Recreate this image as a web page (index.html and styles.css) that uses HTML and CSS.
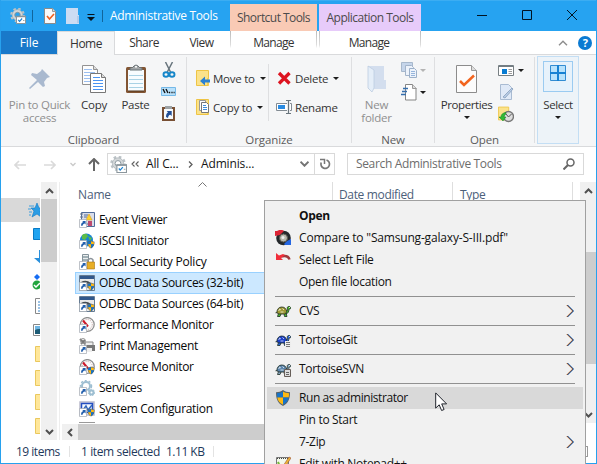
FILE: index.html
```html
<!DOCTYPE html>
<html lang="en">
<head>
<meta charset="utf-8">
<title>Administrative Tools</title>
<link rel="stylesheet" href="styles.css">
</head>
<body>
<svg class="defs" width="0" height="0" aria-hidden="true">
  <defs>
    <symbol id="gear" viewBox="0 0 16 16">
      <g fill="none"><circle cx="7.500" cy="7" r="6.100" stroke="#bcc3c7" stroke-width="2.400" stroke-dasharray="2.390 2.400"/><circle cx="7.500" cy="7" r="4.100" stroke="#d3d7d9" stroke-width="2.600"/><circle cx="7.500" cy="7" r="5.300" stroke="#a4adb2" stroke-width=".6"/><circle cx="7.500" cy="7" r="2.700" stroke="#87949b" stroke-width=".9"/></g>
      <path d="M6.500 8.500h9v7h-9z" fill="#fff" stroke="#8b969c"/><path d="M6 8.500h10" stroke="#8b969c" stroke-width="1.500"/><path d="m8.300 11.800 1.300 1.500 2.500-2.800" fill="none" stroke="#1b83d3" stroke-width="1.200"/><path d="M13 12.500h1.500" stroke="#9aa"/>
    </symbol>
    <symbol id="link" viewBox="0 0 16 16">
      <path d="M.5 7.500h7v8h-7z" fill="#fff" stroke="#a4a9b1" stroke-width=".7"/><path d="M2 13.700c.2-2.300 1-3.200 2.300-3.600L3.200 9h3.400v3.500l-1-1c-1 .3-1.700.8-2 2.200z" fill="#225fad"/>
    </symbol>
    <symbol id="shield" viewBox="0 0 16 16">
      <path d="M8 0c2 1.600 4.300 2.200 7 2.300 0 6.300-1.300 10.700-7 13.700C2.300 13 1 8.600 1 2.300 3.700 2.200 6 1.600 8 0z" fill="#56636b"/>
      <path d="M8 1.600v6H2.300c-.2-1.300-.3-2.600-.3-4.300 2.500-.1 4.400-.7 6-1.700z" fill="#1673c8"/><path d="M8 1.600c1.600 1 3.500 1.600 6 1.700 0 1.700-.1 3-.3 4.300H8z" fill="#fdb912"/><path d="M2.300 7.600H8v7.200c-3.400-1.800-5.200-4-5.700-7.200z" fill="#fdb912"/><path d="M8 7.600h5.700c-.5 3.200-2.300 5.400-5.700 7.200z" fill="#1673c8"/>
    </symbol>
    <symbol id="folder" viewBox="0 0 14 16"><path d="M.5.500h12v15H.5z" fill="#fbe28a" stroke="#eec445"/><path d="M11 8h2v7h-2z" fill="#f3cc53"/></symbol>
    <symbol id="caret" viewBox="0 0 6 3"><path d="M0 0h6L3 3z" fill="currentColor"/></symbol>
    <symbol id="gauge" viewBox="0 0 16 16"><circle cx="8.300" cy="7.500" r="6.900" fill="#fbfbfb" stroke="#8e8e8e" stroke-width="1.300"/><circle cx="8.300" cy="7.500" r="5" fill="none" stroke="#c9a8a8" stroke-dasharray="1 1"/><path d="m4 3.500 5 6" stroke="#cd1728" stroke-width="2"/></symbol>
    <symbol id="odbc" viewBox="0 0 16 16"><path d="M.5.500h15v15H.5z" fill="#e9e9e9" stroke="#657b92"/><path d="M1 1h14v3H1z" fill="#31588c"/><path d="M2 7q5-3 10 1l2 3-3-1Q7 7 3 9z" fill="#454d53"/><path d="M8 9q3-2 5 1v3H8z" fill="#8b9499"/></symbol>
    <symbol id="turtle" viewBox="0 0 16 16"><path d="M11 8.500c1.500-.5 1.700-1.600 1.200-3.500C12 3.300 15.500 2.800 15.700 5c0 1-.9 1-1.700 1 0 2.500-1 4.500-3 5M3 9.500l-2.500.3M3.500 10.500l-1 3H5l1-2.500m3 0 .5 2.500H12l-1-3.500" fill="currentColor" stroke="#1c2b22" stroke-width=".8"/><path d="M1.800 9.800C2 6 4 4 6.800 4s4.700 2 4.900 4.500L10.500 11H4z" stroke="#1c2b22" stroke-width=".8"/><path d="m3.700 8 1-2 1.200 1m1.600-1.500L9 7M5.500 9h3" stroke="#fff" stroke-opacity=".7" fill="none"/><path d="M14 4.500h.8" stroke="#fff"/></symbol>
    <symbol id="chev" viewBox="0 0 8 12"><g fill="none" stroke-width="1"><path d="m.5 0 6 6-6 6" stroke="#d99a5f"/><path d="m1.800 0 6 6-6 6" stroke="#5aa6e6"/><path d="m1.200 0 6 6-6 6" stroke="#412b3b" stroke-width=".9"/></g></symbol>
  </defs>
</svg>
<div class="window">
  <header class="titlebar">
    <div class="quick">
      <svg class="i16"><use href="#gear"/></svg>
      <i class="tick"></i>
      <svg class="doc-q" width="12" height="16" viewBox="0 0 12 16"><path d="M.5.500h8l3 3v12H.5z" fill="#fafafa" stroke="#8b8b8b"/><path d="M8.500.500v3h3" fill="#ddd" stroke="#999"/><path d="m3 8 2.500 3L10 6" fill="none" stroke="#f2601f" stroke-width="1.600"/></svg>
      <svg class="folder-q" width="14" height="16" viewBox="0 0 14 16"><path d="M0 0h12v7h1v9H0z" fill="#ccdcf3"/><path d="M11 8h2v7h-2z" fill="#b5cbe9"/></svg>
      <svg class="drop-q" width="8" height="7" viewBox="0 0 8 7"><path d="M.5 0h7v1h-7zM0 3h8L4 7z" fill="#06121c"/></svg>
      <i class="tick"></i>
    </div>
    <h1 class="title">Administrative Tools</h1>
    <span class="ctx ctx-shortcut">Shortcut Tools</span>
    <span class="ctx ctx-app">Application Tools</span>
    <div class="controls">
      <svg width="10" height="10"><path d="M0 5.500h10" stroke="#001322"/></svg>
      <svg width="10" height="10"><path d="M.5.500h9v9h-9z" fill="none" stroke="#001322"/></svg>
      <svg width="10" height="10"><path d="m0 0 10 10M10 0 0 10" stroke="#001322"/></svg>
    </div>
  </header>
  <nav class="tabs">
    <span class="tab file">File</span><span class="tab home">Home</span><span class="tab share">Share</span><span class="tab view">View</span>
    <span class="tab manage m1">Manage</span><span class="tab manage m2">Manage</span>
    <span class="help"><svg width="10" height="6"><path d="m1 5.300 4-4 4 4" fill="none" stroke="#8c8c8c" stroke-width="1.400"/></svg><b>?</b></span>
  </nav>
  <section class="ribbon">
    <div class="group clipboard">
      <div class="tools">
        <div class="big pin off"><svg width="22" height="22" viewBox="0 0 22 22"><path d="m13 1 8 8-3 1-3 4 1 4-2 1-5-5-8 7-1-1 8-8-6-5 1-2 5 1 4-3z" fill="#a9b9cf"/></svg><span>Pin to Quick<br>access</span></div>
        <div class="big copy"><svg width="26" height="30" viewBox="0 0 26 30"><g fill="#fdfdfd" stroke="#929292"><path d="M1.500 1.500h11l4 4v15h-15z"/><path d="M12.500 1.500v4h4" fill="#ddd"/></g><path d="M3 5.500h8M3 8.500h11M3 11.500h6M3 14.500h6m-6 3h6" stroke="#9bbff0"/><g fill="#fff" stroke="#777"><path d="M9.500 9.500h11l4 4v15h-15z"/><path d="M20.500 9.500v4h4" fill="#ddd"/></g><path d="M12 13.500h7m-7 3h10m-10 3h10m-10 3h10m-10 3h10" stroke="#4a94f2"/></svg><span>Copy</span></div>
        <div class="big paste"><svg width="22" height="30" viewBox="0 0 22 30"><rect x="1" y="3" width="20" height="26" rx="1.500" fill="#825533"/><path d="M3 6h16v21H3z" fill="#f7fcff"/><path d="M4 11.500h14m-14 4h14m-14 4h14m-14 4h14" stroke="#a9d2e5"/><path d="M5 6V4q3 0 4-2 2-2 4 0 1 2 4 2v2z" fill="#a2a6a8" stroke="#697276"/><circle cx="11" cy="2.700" r="1" fill="#fff"/><path d="M3 27h16" stroke="#4f341d"/></svg><span>Paste</span></div>
        <div class="stack">
          <svg width="16" height="16" viewBox="0 0 16 16"><path d="m4.500 0 5 10m2-10L6.300 10" stroke="#68757d" stroke-width="1.500"/><g fill="none" stroke="#1586c9" stroke-width="1.900"><ellipse cx="5" cy="12.500" rx="2.500" ry="2.300"/><ellipse cx="11" cy="12.500" rx="2.500" ry="2.300"/></g></svg>
          <svg width="16" height="16" viewBox="0 0 16 16"><path d="M.5 4.500h14v8H.5z" fill="#b9e1fb" stroke="#75b9e8"/><path d="m2 6 2 4m1-4 2 4" stroke="#151515" stroke-width="1.400"/><path d="M8 9.500h1.200m1.200 0h1.200m1 0h1" stroke="#111" stroke-width="1.500"/></svg>
          <svg width="16" height="18" viewBox="0 0 16 18"><rect x="1" y="3" width="13" height="14" fill="#795034"/><path d="M3 5h9v10H3z" fill="#f7fafc"/><path d="M4 2h7v3H4z" fill="#9da2a5"/><path d="M5 13c0-3 1-4 2-4.500L5.700 7h5v5L9.300 10.700C8 11 7.300 12 7 14z" fill="#234f95"/></svg>
        </div>
      </div>
      <div class="caption">Clipboard</div>
    </div>
    <div class="group organize">
      <div class="tools pair">
        <div class="cmds">
          <div class="cmd"><svg width="14" height="16"><use href="#folder" width="14" height="16"/><path d="M14 9.500v3H9v3L4 11l5-4.500v3z" fill="#2b82d2"/></svg><span>Move to</span><svg class="car"><use href="#caret"/></svg></div>
          <div class="cmd"><svg width="14" height="16"><use href="#folder" width="14" height="16"/><path d="M3.500 1.500h6v10h-6z" fill="#fff" stroke="#999"/><path d="M5.500 3.500h5l2 2v8h-7z" fill="#fff" stroke="#777"/><path d="M7 6.500h3M7 8.500h4m-4 2h4" stroke="#428ed8"/></svg><span>Copy to</span><svg class="car"><use href="#caret"/></svg></div>
        </div>
        <div class="cmds second">
          <div class="cmd"><svg width="16" height="16"><path d="m3 3 10.500 10.500m0-10.500L3 13.500" stroke="#dd1420" stroke-width="3.300"/></svg><span>Delete</span><svg class="car"><use href="#caret"/></svg></div>
          <div class="cmd"><svg width="16" height="16"><path d="M.5 4.500h15v7H.5z" fill="#fff" stroke="#828b93"/><path d="M2 6h7v4H2z" fill="#2a8be2"/><path d="M12.500 1v14" stroke="#f5f6f7" stroke-width="3"/><path d="M10 1.500h5m-5 13h5M12.500 2v12" stroke="#68747c" stroke-width="1.200"/></svg><span>Rename</span></div>
        </div>
      </div>
      <div class="caption">Organize</div>
    </div>
    <div class="group new">
      <div class="tools">
        <div class="big off newf"><svg width="20" height="30" viewBox="0 0 20 30"><path d="M1 2h16v14h2v9H1z" fill="#d3deee"/><path d="m1 2 6 4v18l-2 4-4-4z" fill="#e5eef8" stroke="#bccde1" stroke-width=".8"/></svg><span>New<br>folder</span></div>
        <div class="minis">
          <div><svg width="16" height="17"><path d="M.5.500h11v9H.5z" fill="#c5d5ea" stroke="#a7b8cc"/><path d="M4.500 3.500h6l2 2v8h-8z" fill="#edf3fb" stroke="#a3b4ca"/><path d="M8.500 6.500h5l2 2v7h-7z" fill="#edf3fb" stroke="#9cb0c9"/><path d="M10 9.500h4m-4 2h4m-4 2h4" stroke="#96b5dc"/></svg><svg class="car pale"><use href="#caret"/></svg></div>
          <div><svg width="16" height="17"><path d="M4.500.500h7l3.500 3.500v12H4.500z" fill="#fff" stroke="#858585"/><path d="M11.500.500v4h4" fill="#ddd" stroke="#999"/><path d="M2 4.500h5M1 7.500h5m-6 3h5" stroke="#356eac" stroke-width="1.300"/></svg><svg class="car"><use href="#caret"/></svg></div>
        </div>
      </div>
      <div class="caption">New</div>
    </div>
    <div class="group open">
      <div class="tools">
        <div class="big props"><svg width="22" height="30" viewBox="0 0 22 30"><path d="M.5 1.500h15l5 5v22H.5z" fill="#fcfcfc" stroke="#8c8c8c"/><path d="M15.500 1.500v5h5" fill="#ddd" stroke="#999"/><path d="m4 17 4 4L18 11.500" fill="none" stroke="#f2651f" stroke-width="2.500"/></svg><span>Properties</span><svg class="car"><use href="#caret"/></svg></div>
        <div class="minis o">
          <div><svg width="16" height="16"><path d="M.5 2.500h15v10H.5z" fill="#fff" stroke="#777f83"/><path d="M1 3h14" stroke="#737d83" stroke-width="2"/><path d="M4 6h5v5H4z" fill="#087bd2"/><path d="M10.500 6.500h3.500m-3.500 2h3.500m-3.500 2h3.500" stroke="#9b9b9b"/></svg><svg class="car"><use href="#caret"/></svg></div>
          <div><svg width="16" height="17"><path d="M2.500.500h8l3 3v12h-11z" fill="#dfe9f7" stroke="#a9bbd2"/><path d="m5 13 9-9 1 1-8 9z" fill="#b9cde7" stroke="#94aac5"/></svg></div>
          <div><svg width="16" height="17"><use href="#folder" width="12" height="15"/><circle cx="10.500" cy="10.500" r="5" fill="#ddd" stroke="#777" stroke-width="1.400"/><path d="m8 8 2.500 3 3-3" fill="none" stroke="#555"/><path d="M8 6.500Q3 7 3 11H1l4 4 3-4H6q0-2 2-3z" fill="#32ba35" stroke="#168324" stroke-width=".5"/></svg></div>
        </div>
      </div>
      <div class="caption">Open</div>
    </div>
    <div class="select">
      <div class="select-icon"><svg width="16" height="16"><path d="M.5.500h15v15H.5z" fill="#b7e2fc" stroke="#328cd2"/><path d="M8 0v16M0 8h16" stroke="#1681d3" stroke-width="2"/></svg></div>
      <span>Select</span><svg class="car"><use href="#caret"/></svg>
    </div>
  </section>
  <section class="address-row">
    <div class="arrows">
      <svg width="12" height="10"><path d="M12 5H1m4-4L1 5l4 4" fill="none" stroke="#dadada" stroke-width="1.700"/></svg>
      <svg width="12" height="10"><path d="M0 5h11M7 1l4 4-4 4" fill="none" stroke="#dadada" stroke-width="1.700"/></svg>
      <svg width="6" height="5"><path d="m.5 1 2.500 2.500L5.500 1" fill="none" stroke="#c9c9c9" stroke-width="1.300"/></svg>
      <svg width="12" height="13"><path d="M6 13V1M1 6l5-5 5 5" fill="none" stroke="#666" stroke-width="2"/></svg>
    </div>
    <div class="address"><svg class="i16"><use href="#gear"/></svg>
      <svg class="laq" width="8" height="6"><path d="M3.500.500 1 3l2.500 2.500m4-5L5 3l2.500 2.500" fill="none" stroke="#5e5e5e" stroke-width="1.100"/></svg><span class="crumb1">All C...</span>
      <svg class="raq" width="5" height="7"><path d="m1 .5 3 3-3 3" fill="none" stroke="#5e5e5e" stroke-width="1.300"/></svg><span class="crumb2">Adminis...</span>
      <svg class="down" width="9" height="6"><path d="m.5.700 4 4 4-4" fill="none" stroke="#747474" stroke-width="2"/></svg>
      <i class="refresh"><svg width="12" height="12"><path d="M7.500 2A4.300 4.300 0 1 1 2.200 4.500" fill="none" stroke="#777" stroke-width="1.700"/><path d="M1 1.500h4.500V6" fill="none" stroke="#777" stroke-width="1.500"/></svg></i>
    </div>
    <div class="search"><span>Search Administrative Tools</span><svg width="12" height="12"><circle cx="7.500" cy="4.500" r="3.500" fill="none" stroke="#666" stroke-width="1.500"/><path d="m5 7-4.500 4.500" stroke="#666" stroke-width="2"/></svg></div>
  </section>
  <main class="body">
    <aside class="side">
      <div class="side-list">
        <div class="side-item gap"></div>
        <div class="side-item on"><svg viewBox="0 0 16 16"><path d="m9 1 2 5h5l-4 3 1 6-4-3-5 3 2-6-3-3h4z" fill="#2b9ce4" stroke="#137bc5" stroke-width=".6"/><path d="M1 4h5M0 7h3m-2 3h3m-3 3h2" stroke="#3f9fde"/></svg></div>
        <div class="side-item"><svg viewBox="0 0 16 16"><path d="M5.500 2.500h12v11h-12z" fill="#21a4f0" stroke="#087ac5"/></svg></div>
        <div class="side-item"><svg viewBox="0 0 16 16"><path d="M11 0h4v8h4l-6 6-7-6h5z" fill="#2a90dc"/></svg></div>
        <div class="side-item"><svg viewBox="0 0 16 16"><path d="m9 0 3 3-3 3-3-3z" fill="#156cf3"/><circle cx="9" cy="11" r="4.500" fill="#21a53d"/><path d="m6 11 2 2 4-4" fill="none" stroke="#fff" stroke-width="1.500"/></svg></div>
        <div class="side-item"><svg viewBox="0 0 16 16"><path d="M7.500.500h10v15h-10z" fill="#fff" stroke="#888"/><path d="M10 4h5m-5 3h5m-5 3h5m-5 3h5" stroke="#3986cc"/></svg></div>
        <div class="side-item"><svg viewBox="0 0 16 16"><path d="M5.500 2.500h12v11h-12z" fill="#fff" stroke="#888"/><path d="M7 4h8v4H7z" fill="#70b6e3"/><path d="M7 8q4-2 8 0v4H7z" fill="#1c5b75"/></svg></div>
        <div class="side-item"><svg viewBox="0 0 16 16"><path d="M7.500.500h12v15h-12z" fill="#ffe79a" stroke="#eac85e"/></svg></div>
        <div class="side-item"><svg viewBox="0 0 16 16"><path d="M7.500.500h12v15h-12z" fill="#ffe79a" stroke="#eac85e"/></svg></div>
        <div class="side-item"><svg viewBox="0 0 16 16"><path d="M7.500.500h12v15h-12z" fill="#ffe79a" stroke="#eac85e"/></svg></div>
        <div class="side-item"><svg viewBox="0 0 16 16"><path d="M7.500.500h12v15h-12z" fill="#ffe79a" stroke="#eac85e"/></svg></div>
      </div>
      <div class="vscroll"><svg width="9" height="6"><path d="m1 5 3.500-3.500L8 5" fill="none" stroke="#505050" stroke-width="2"/></svg><i class="thumb"></i><svg width="9" height="6"><path d="m1 1 3.500 3.500L8 1" fill="none" stroke="#505050" stroke-width="2"/></svg></div>
    </aside>
    <div class="files">
      <div class="head"><span class="name">Name</span><svg class="sort" width="9" height="5"><path d="m.5 4.500 4-4 4 4" fill="none" stroke="#777"/></svg><span class="date">Date modified</span><span class="type">Type</span></div>
      <div class="rows">
        <div class="row"><svg class="i16"><path d="M2.500.500h13v14h-13z" fill="#d9ddea" stroke="#506c9b"/><path d="M5 3h4M5 5h3m-3 7h8" stroke="#526c9b"/><path d="m10 2 3 6H7z" fill="#ffd32d" stroke="#d99e18" stroke-width=".6"/><path d="M9 9h4v5H9z" fill="#bd4a70"/><path d="M1 2h3M1 5h3" stroke="#687789"/><use href="#link"/></svg><span>Event Viewer</span></div>
        <div class="row"><svg class="i16"><circle cx="7.500" cy="7" r="6.500" fill="#1984d1"/><path d="M3 2q5-3 6 1L6 7 3 6zm6 1 4 2-2 3z" fill="#5bbc48"/><use href="#link"/><use href="#shield" x="8" y="7" width="8" height="9"/></svg><span>iSCSI Initiator</span></div>
        <div class="row local"><svg class="i16"><path d="M3.500.500h6v13h-6z" fill="#eceff0" stroke="#84939b"/><path d="M4 3h5m-5 3h5" stroke="#55717a"/><path d="M9 9V6q3-3 5 0v3" fill="none" stroke="#8c949b" stroke-width="1.500"/><path d="M8 8h7.500v7H8z" fill="#e8ae24" stroke="#a77312" stroke-width=".6"/><use href="#link"/></svg><span>Local Security Policy</span></div>
        <div class="row selected"><svg class="i16"><use href="#odbc"/><use href="#link"/><use href="#shield" x="8" y="7" width="8" height="9"/></svg><span>ODBC Data Sources (32-bit)</span></div>
        <div class="row"><svg class="i16"><use href="#odbc"/><use href="#link"/><use href="#shield" x="8" y="7" width="8" height="9"/></svg><span>ODBC Data Sources (64-bit)</span></div>
        <div class="row"><svg class="i16"><use href="#gauge"/><use href="#link"/></svg><span>Performance Monitor</span></div>
        <div class="row"><svg class="i16"><path d="M6 4h8v4H6z" fill="#eee" stroke="#888"/><path d="M5 7h11v6H7z" fill="#777"/><path d="M8 10h5v4H8z" fill="#eee"/><path d="m1 1 5 5m-4 0 4-4" stroke="#777" stroke-width="2"/><circle cx="4" cy="3" r="2.500" fill="none" stroke="#999"/><use href="#link"/></svg><span>Print Management</span></div>
        <div class="row"><svg class="i16"><use href="#gauge"/><use href="#link"/><use href="#shield" x="8" y="7" width="8" height="9"/></svg><span>Resource Monitor</span></div>
        <div class="row"><svg class="i16"><g fill="none" stroke="#9dbed1"><circle cx="7" cy="6" r="4" stroke-width="2"/><circle cx="7" cy="6" r="5.500" stroke-width="1.500" stroke-dasharray="2 2"/><circle cx="12.500" cy="12.500" r="2" stroke-width="2"/><circle cx="12.500" cy="12.500" r="3.200" stroke-dasharray="1.500 1.200"/></g><use href="#link"/></svg><span>Services</span></div>
        <div class="row"><svg class="i16"><path d="M1 1h14v13H1z" fill="#fff" stroke="#bbc" stroke-width="1.500"/><path d="M2.500 2.500h11v9h-11z" fill="#f6faff" stroke="#234ec1" stroke-width="1.500"/><path d="m4 9 3-4 2 4 4-5" fill="none" stroke="#3467ba" stroke-width="1.500"/><use href="#link"/><use href="#shield" x="8" y="7" width="8" height="9"/></svg><span>System Configuration</span></div>
        <div class="row"><svg class="i16"><path d="M0 .5h16" stroke="#999"/></svg></div>
      </div>
      <div class="hscroll"><svg width="6" height="9"><path d="M5 1 1.500 4.500 5 8" fill="none" stroke="#505050" stroke-width="2"/></svg><i class="hthumb"></i></div>
    </div>
    <div class="vscroll main-scroll"><svg width="9" height="6"><path d="m1 5 3.500-3.500L8 5" fill="none" stroke="#505050" stroke-width="2"/></svg><i class="thumb"></i><svg width="9" height="6"><path d="m1 1 3.500 3.500L8 1" fill="none" stroke="#505050" stroke-width="2"/></svg></div>
  </main>
  <footer class="status"><span class="s1">19 items</span><i></i><span class="s2">1 item selected</span><span class="s3">1.11 KB</span><i></i><b class="viewbox"></b></footer>
</div>
<div class="menu">
  <div class="item strong"><span>Open</span></div>
  <div class="item"><svg class="i16"><circle cx="8.500" cy="8" r="7.300" fill="#24282b"/><path d="M0 1h2q4-2.500 7 0L5 5 0 6z" fill="#dc2435"/><path d="M16 9v6h-6l-1-1 3-3z" fill="#2466e2"/><circle cx="8.500" cy="8" r="4" fill="#b9b8ad" stroke="#5a5951"/><circle cx="8" cy="7.500" r="1.500" fill="#eee"/></svg><span class="long">Compare to "Samsung-galaxy-S-III.pdf"</span></div>
  <div class="item"><svg class="i16"><path d="M14.500 7.500Q13 2.500 6 4.500" fill="none" stroke="#a1393c" stroke-width="2.500"/><path d="M1 1v7h7L6 6l4-3-2-1-4 1.500z" fill="#f12e3a"/></svg><span>Select Left File</span></div>
  <div class="item"><span>Open file location</span></div>
  <hr>
  <div class="item"><svg class="i16 green"><use href="#turtle"/></svg><span>CVS</span><svg class="chev"><use href="#chev"/></svg></div>
  <hr>
  <div class="item"><svg class="i16 navy"><use href="#turtle"/><path d="M10 9h6v7h-6z" fill="#eee"/><path d="M11 10.500h4m-4 2h4m-4 2h4" stroke="#777"/></svg><span>TortoiseGit</span><svg class="chev"><use href="#chev"/></svg></div>
  <hr>
  <div class="item"><svg class="i16 steel"><use href="#turtle"/><path d="M9.500 8.500h6v7h-6z" fill="#ddd" stroke="#665e59"/><path d="M11 11.500h3m-3 2h3" stroke="#666"/></svg><span>TortoiseSVN</span><svg class="chev"><use href="#chev"/></svg></div>
  <hr>
  <div class="item hover"><svg class="i16"><use href="#shield"/></svg><span class="run">Run as administrator</span></div>
  <div class="item"><span>Pin to Start</span></div>
  <div class="item"><span>7-Zip</span><svg class="chev"><use href="#chev"/></svg></div>
  <div class="item"><svg class="i16"><path d="M1.500 1.500h12v14h-12z" fill="#f3f8ec" stroke="#777"/><path d="M2 2.500h11" stroke="#444" stroke-dasharray="1 1"/><path d="m3 6 3 7 5-2" fill="none" stroke="#74bb37" stroke-width="2"/><path d="m8 10 6-9 2 1-6 9z" fill="#efb736" stroke="#9a4d31" stroke-width=".6"/></svg><span>Edit with Notepad++</span></div>
</div>
<svg class="cursor" width="13" height="20" viewBox="0 0 13 20"><path d="M.7.900v15.200l3.500-3.300 2.400 5.700 2.500-1-2.400-5.600h4.900z" fill="#fff" stroke="#20242c"/></svg>
</body>
</html>
```
FILE: styles.css
```css
* { box-sizing: border-box; }
html, body { margin: 0; width: 597px; height: 464px; overflow: hidden; }
body { position: relative; font: 12px/16px "Open Sans", "Noto Sans", sans-serif; letter-spacing: -.32px; color: #151515; background: #fff; white-space: nowrap; }
svg { display: block; flex: none; }
.defs { position: absolute; }
.i16 { width: 16px; height: 16px; }
.window { width: 597px; height: 464px; border: solid #27a1ee; border-width: 0 1px 1px; display: flex; flex-direction: column; overflow: hidden; }

.titlebar { height: 31px; flex: none; background: #26a3f1; border-top: 1px solid #3cadf2; display: flex; color: #fff; }
.quick { width: 109px; display: flex; align-items: center; padding-left: 9px; }
.tick { width: 1px; height: 12px; background: #11659c; margin-left: 6px; }
.doc-q { margin-left: 11px; }
.folder-q { margin-left: 10px; }
.drop-q { margin: 3px 0 0 7px; }
.quick .tick:last-child { margin-left: 7px; }
.title { margin: 0; width: 120px; font-size: 12px; font-weight: 400; line-height: 30px; letter-spacing: -.32px; }
.ctx { margin-top: 3px; height: 27px; line-height: 28px; text-align: center; color: #4b4a4b; letter-spacing: -.55px; }
.ctx-shortcut { width: 87px; background: #f9cab5; }
.ctx-app { width: 102px; margin-left: 2px; background: #e7cbfa; letter-spacing: -.5px; }
.controls { margin-left: 56px; display: flex; gap: 35px; padding-top: 9px; }

.tabs { height: 24px; flex: none; display: flex; background: #fff; border-bottom: 1px solid #d9dadc; line-height: 24px; color: #333; letter-spacing: -.5px; }
.tab { text-align: center; }
.file { width: 56px; background: #1979ca; color: #fff; letter-spacing: -.12px; }
.home { width: 58px; height: 24px; background: #f5f6f7; border: solid #d9dadc; border-width: 1px 1px 0; line-height: 23px; }
.share { width: 58px; }
.view { width: 57px; }
.manage { width: 87px; border: solid transparent; border-width: 0 1px; border-image: linear-gradient(#bbb, #ddd 60%, #fff 75%) 0 1; letter-spacing: -.7px; }
.m2 { width: 102px; margin-left: 2px; padding-right: 2px; }
.help { display: flex; align-items: center; margin-left: 137px; gap: 10px; }
.help b { width: 14px; height: 14px; border-radius: 50%; background: #0b7ad2; color: #fff; text-align: center; line-height: 14px; font-size: 11px; }

.ribbon { height: 92px; flex: none; background: #f5f6f7; border-bottom: 1px solid #d9dadc; display: flex; color: #333; line-height: 13px; font-size: 11.5px; letter-spacing: -.25px; }
.group { height: 86px; margin-top: 2px; border-right: 1px solid #dedfe1; display: flex; flex-direction: column; }
.clipboard { width: 186px; }
.organize { width: 165px; }
.new { width: 83px; }
.open { width: 100px; }
.tools { height: 72px; flex: none; display: flex; padding-top: 1px; }
.caption { text-align: center; line-height: 18px; margin-top: -1px; padding-top: 3px; flex: none; height: 21px; color: #5b5b5b; letter-spacing: -.1px; }
.big { display: flex; flex-direction: column; align-items: center; text-align: center; padding-top: 6px; }
.big > svg:first-child { height: 30px; }
.big span { margin-top: 4px; }
.off { color: #8f8f8f; }
.pin { width: 77px; }
.copy { width: 32px; }
.paste { width: 51px; }
.stack { width: 16px; padding-top: 4px; display: flex; flex-direction: column; gap: 5px; }
.car { width: 6px; height: 3px; color: #1d1d1d; }
.big .car, .select .car { margin-top: 5px; }
.pale { color: #b4b4b4; }
.pair { padding-top: 7px; }
.cmds { width: 85px; height: 57px; border-right: 1px solid #dedfe1; padding-left: 9px; display: flex; flex-direction: column; gap: 13px; }
.cmds.second { border: 0; padding-left: 7px; }
.cmd { display: flex; height: 16px; align-items: center; }
.cmd:first-child { margin-top: 6px; }
.cmd span { margin-left: 3px; }
.cmd .car { margin-left: 5px; }
.newf { width: 49px; }
.minis { display: flex; flex-direction: column; gap: 5px; padding-top: 4px; }
.minis div { display: flex; align-items: center; gap: 3px; height: 17px; }
.o .car { margin-left: 1px; }
.props { width: 63px; letter-spacing: -.4px; }
.select { width: 42px; height: 88px; margin: 1px 0 0 2px; border: 1px solid #c3def4; background: #edf3f8; display: flex; flex-direction: column; align-items: center; letter-spacing: -.35px; }
.select-icon { width: 30px; height: 31px; margin-top: 4px; padding: 3px 6px; border: 1px solid #9bcbf1; background: #e7f2fb; margin-bottom: 6px; }

.address-row { height: 35px; flex: none; display: flex; background: #fff; letter-spacing: -.15px; }
.arrows { width: 106px; height: 35px; display: flex; align-items: center; padding-left: 13px; }
.arrows svg:nth-child(2) { margin-left: 18px; }
.arrows svg:nth-child(3) { margin-left: 14px; }
.arrows svg:nth-child(4) { margin-left: 12px; }
.address { width: 228px; height: 22px; margin-top: 6px; border: 1px solid #d9d9d9; display: flex; align-items: center; padding-left: 2px; }
.address .i16 { width: 17px; height: 17px; }
.laq { margin-left: 4px; }
.crumb1 { width: 37px; margin-left: 7px; }
.raq { margin-left: 5px; }
.crumb2 { width: 88px; margin-left: 8px; }
.down { margin-left: 11px; }
.refresh { margin-left: 5px; padding: 4px 0 0 4px; height: 20px; border-left: 1px solid #d9d9d9; }
.search { width: 237px; height: 22px; margin: 6px 0 0 12px; padding: 0 8px; border: 1px solid #d9d9d9; color: #6d6d6d; display: flex; align-items: center; justify-content: space-between; letter-spacing: -.35px; }

.body { height: 258px; flex: none; display: flex; }
.side { width: 59px; height: 258px; border-right: 1px solid #eee; display: flex; overflow: hidden; }
.side-list { width: 39px; overflow: hidden; margin-right: 1px; }
.side-item { height: 24px; padding: 4px 0 0 27px; }
.side-item svg { width: 16px; height: 16px; }
.gap { height: 16px; }
.on { background: #d9d9d9; }
.vscroll { width: 16px; height: 258px; background: #f0f0f0; display: flex; flex-direction: column; align-items: center; padding: 6px 0 5px; }
.thumb { width: 16px; height: 63px; margin: 5px 0 auto; background: #cdcdcd; }
.main-scroll { height: 241px; margin-left: 1px; }
.main-scroll .thumb { height: 112px; margin-top: 58px; }
.files { width: 519px; padding-left: 2px; }
.head { height: 27px; display: flex; color: #4c607a; line-height: 26px; letter-spacing: -.35px; }
.name { width: 135px; padding-left: 16px; letter-spacing: -.15px; }
.sort { margin: 0 0 0 1px; }
.date { margin-left: 125px; width: 120px; height: 20px; padding-left: 6px; border-left: 1px solid #dedede; }
.type { width: 121px; height: 20px; padding-left: 7px; border: solid #dedede; border-width: 0 1px; }
.rows { height: 215px; overflow: hidden; padding-left: 13px; color: #080808; }
.row { display: flex; align-items: center; height: 21px; padding-left: 4px; gap: 4px; }
.local { letter-spacing: -.22px; }
.selected { height: 22px; background: #cce8ff; border: 1px solid #99d1ff; padding-left: 3px; margin-bottom: -1px; }
.hscroll { height: 16px; background: #f0f0f0; display: flex; align-items: center; padding-left: 5px; }
.hthumb { width: 420px; height: 16px; margin-left: 5px; background: #cdcdcd; }
.status { height: 23px; display: flex; align-items: center; color: #1e395b; letter-spacing: -.5px; }
.status i { width: 1px; height: 11px; background: #e3e3e3; }
.s1 { width: 53px; margin-left: 15px; }
.s2 { width: 85px; margin-left: 11px; letter-spacing: -.38px; }
.s3 { width: 47px; }
.viewbox { width: 11px; height: 11px; border: 1px solid #999; margin-left: 363px; }

.menu { position: absolute; left: 264px; top: 200px; width: 322px; height: 264px; padding: 4px 2px; background: #f1f1f1; border: 1px solid #a0a0a0; border-bottom: 0; overflow: hidden; color: #111; }
.item { height: 22px; display: grid; grid-template-columns: 16px 1fr 8px; column-gap: 8px; align-items: center; padding: 0 9px 0 8px; }
.item span { grid-column: 2; }
.item > .i16 { grid-column: 1; grid-row: 1; }
.menu hr { height: 1px; margin: 3px 8px; border: 0; background: #919191; }
.strong { font-weight: 700; }
.long { letter-spacing: -.18px; }
.run { letter-spacing: -.42px; }
.hover { background: #d9d9d9; }
.chev { width: 8px; height: 12px; }
.green { color: #4fc02f; fill: #a09a35; }
.navy { color: #2f6fe8; fill: #1b3fc8; }
.steel { color: #8fb0cd; fill: #5b84ab; }
.cursor { position: absolute; left: 435px; top: 392px; }
```
